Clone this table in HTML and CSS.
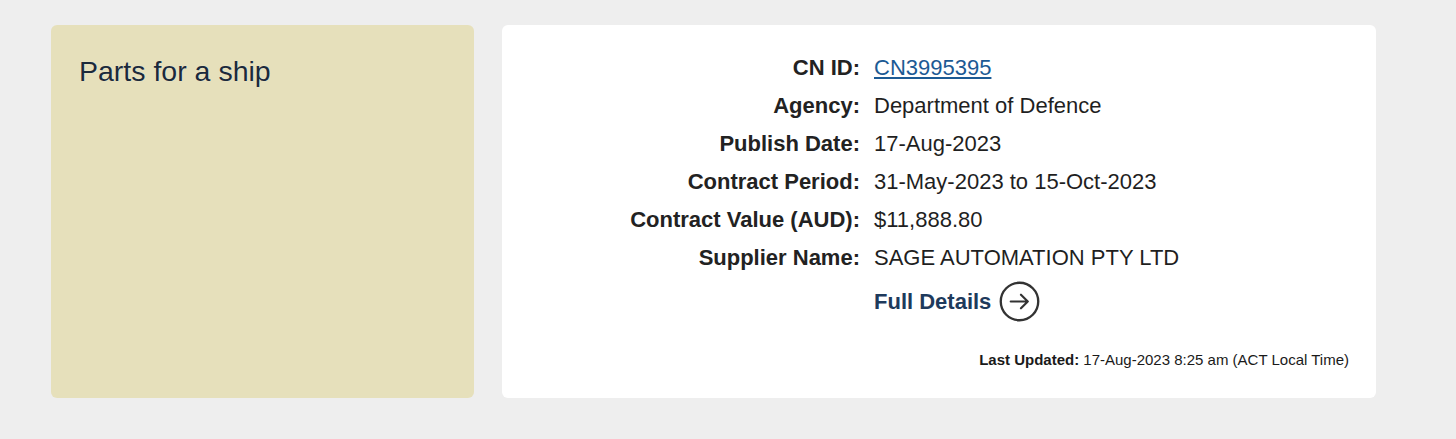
FILE: index.html
```html
<!DOCTYPE html>
<html lang="en">
<head>
<meta charset="utf-8">
<title>Contract Notice</title>
<link rel="stylesheet" href="styles.css">
</head>
<body>
<main class="page">
  <section class="summary-card">
    <h2 class="summary-title">Parts for a ship</h2>
  </section>
  <section class="detail-card">
    <dl class="detail-list">
      <dt>CN ID:</dt><dd><a class="cn-link" href="#">CN3995395</a></dd>
      <dt>Agency:</dt><dd>Department of Defence</dd>
      <dt>Publish Date:</dt><dd>17-Aug-2023</dd>
      <dt>Contract Period:</dt><dd>31-May-2023 to 15-Oct-2023</dd>
      <dt>Contract Value (AUD):</dt><dd>$11,888.80</dd>
      <dt>Supplier Name:</dt><dd>SAGE AUTOMATION PTY LTD</dd>
    </dl>
    <div class="full-row">
      <a class="full-link" href="#">Full Details
        <svg class="arrow-icon" width="41" height="41" viewBox="0 0 42 42" aria-hidden="true">
          <circle cx="21" cy="21" r="19.2" fill="none" stroke="#333" stroke-width="2.4"/>
          <path d="M12 21 H29.5 M22.5 14 L29.5 21 L22.5 28" fill="none" stroke="#333" stroke-width="2.2" stroke-linecap="round" stroke-linejoin="round"/>
        </svg>
      </a>
    </div>
    <p class="updated"><strong>Last Updated:</strong> 17-Aug-2023 8:25 am (ACT Local Time)</p>
  </section>
</main>
</body>
</html>
```

FILE: styles.css
```css
html, body {
  margin: 0;
  padding: 0;
  background: #eeeeee;
}
body {
  font-family: "Liberation Sans", Arial, sans-serif;
  color: #222222;
}
.page {
  display: flex;
  gap: 28px;
  padding: 25px 0 0 51px;
}
.summary-card {
  width: 423px;
  height: 373px;
  box-sizing: border-box;
  background: #e6e0bb;
  border-radius: 6px;
  padding: 30px 28px;
}
.summary-title {
  margin: 0;
  font-size: 28.5px;
  font-weight: normal;
  line-height: 32px;
  color: #1b2a3b;
  text-shadow: 0 0 1px rgba(255, 255, 255, 0.6);
}
.detail-card {
  width: 874px;
  height: 373px;
  box-sizing: border-box;
  background: #ffffff;
  border-radius: 6px;
  padding: 24px 27px 0 0;
  display: flex;
  flex-direction: column;
}
.detail-list {
  display: grid;
  grid-template-columns: 358px 1fr;
  column-gap: 14px;
  margin: 0;
  font-size: 22px;
  line-height: 38px;
}
.detail-list dt {
  text-align: right;
  font-weight: bold;
  color: #222222;
}
.detail-list dd {
  margin: 0;
  color: #1f1f1f;
}
.cn-link {
  color: #1c5a94;
  text-decoration: underline;
  text-underline-offset: 2px;
}
.full-row {
  padding-left: 372px;
  margin-top: 4px;
}
.full-link {
  display: inline-flex;
  align-items: center;
  gap: 8px;
  font-size: 22px;
  font-weight: bold;
  color: #1e3a5c;
  text-decoration: none;
}
.arrow-icon {
  display: block;
}
.updated {
  margin: 29px 0 0;
  text-align: right;
  font-size: 15px;
  color: #1a1a1a;
}
.updated strong {
  font-weight: bold;
}
```
